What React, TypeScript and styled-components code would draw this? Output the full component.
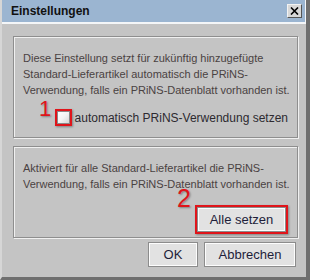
import React from "react";
import styled, { createGlobalStyle } from "styled-components";

const GlobalStyle = createGlobalStyle`
  html, body {
    margin: 0;
    padding: 0;
    background: #c4c4c4;
  }
  body {
    font-family: "Liberation Sans", Arial, sans-serif;
  }
`;

const Window = styled.div`
  width: 310px;
  height: 280px;
  box-sizing: border-box;
  display: flex;
  flex-direction: column;
  background: #c4c4c4;
  border-left: 2px solid #d6d6d6;
  border-right: 4px solid #6f6f6f;
  border-bottom: 3px solid #6f6f6f;
`;

const TitleBar = styled.div`
  height: 24px;
  box-sizing: border-box;
  display: flex;
  align-items: center;
  justify-content: space-between;
  padding: 0 3px 0 9px;
  background: #9bb5d1;
  border-bottom: 2px solid #f4f6f8;
  border-right: 1px solid #f4f6f8;
`;

const Title = styled.span`
  font-size: 12px;
  font-weight: bold;
  color: #111;
`;

const CloseButton = styled.div`
  width: 15px;
  height: 14px;
  box-sizing: border-box;
  display: flex;
  align-items: center;
  justify-content: center;
  background: #d8d8d8;
  border: 1px solid;
  border-color: #f2f2f2 #555 #555 #f2f2f2;
`;

const Content = styled.div`
  flex: 1;
  display: flex;
  flex-direction: column;
  padding: 12px 8px 0 11px;
`;

const Panels = styled.div`
  display: flex;
  flex-direction: column;
  gap: 8px;
`;

const Panel = styled.div<{ $height: number }>`
  position: relative;
  height: ${(p) => p.$height}px;
  box-sizing: border-box;
  display: flex;
  flex-direction: column;
  border: 1px solid #8e8e8e;
  box-shadow: inset 1px 1px 0 #f0f0f0, 1px 1px 0 #f0f0f0;
  padding: 13px 9px 0 9px;
`;

const Text = styled.p`
  margin: 0;
  font-size: 11px;
  line-height: 16px;
  white-space: nowrap;
  color: #4a4242;
`;

const CheckRow = styled.div`
  margin-top: auto;
  margin-bottom: 11px;
  display: flex;
  align-items: center;
  justify-content: flex-end;
  gap: 3px;
`;

const Marked = styled.div`
  border: 2px solid #e0141a;
  box-shadow: 1px 1px 2px rgba(0, 0, 0, 0.35);
  display: flex;
`;

const CheckBox = styled.div`
  width: 11px;
  height: 11px;
  border: 1px solid #8a8a8a;
  background: linear-gradient(135deg, #ffffff 0%, #f4f4f4 50%, #d6d6d6 100%);
`;

const CheckLabel = styled.span`
  font-size: 12px;
  white-space: nowrap;
  color: #2d2a30;
`;

const Marker = styled.span<{ $left: number; $top: number; $size: number }>`
  position: absolute;
  left: ${(p) => p.$left}px;
  top: ${(p) => p.$top}px;
  font-size: ${(p) => p.$size}px;
  line-height: ${(p) => p.$size}px;
  color: #e0141a;
  text-shadow: 1px 1px 2px rgba(0, 0, 0, 0.35);
`;

const ButtonRow = styled.div<{ $bottom?: number }>`
  margin-top: auto;
  margin-bottom: ${(p) => p.$bottom ?? 0}px;
  display: flex;
  justify-content: flex-end;
  gap: 6px;
`;

const Button = styled.div<{ $width: number }>`
  width: ${(p) => p.$width}px;
  height: 25px;
  box-sizing: border-box;
  display: flex;
  align-items: center;
  justify-content: center;
  background: #e2e2e2;
  border: 1px solid #8c8c8c;
  box-shadow: inset 1px 1px 0 #fdfdfd, inset -1px -1px 0 #fdfdfd;
  font-size: 13px;
  color: #1e1e3a;
`;

const Footer = styled.div`
  display: flex;
  justify-content: flex-end;
  gap: 6px;
  padding: 4px 2px 0 0;
`;

export default function App() {
  return (
    <>
      <GlobalStyle />
      <Window>
        <TitleBar>
          <Title>Einstellungen</Title>
          <CloseButton>
            <svg width="9" height="8" viewBox="0 0 9 8">
              <path d="M1 0.5 L8 7.5 M8 0.5 L1 7.5" stroke="#000" strokeWidth="1.6" />
            </svg>
          </CloseButton>
        </TitleBar>
        <Content>
          <Panels>
            <Panel $height={102}>
              <Text>
                Diese Einstellung setzt für zukünftig hinzugefügte
                <br />
                Standard-Lieferartikel automatisch die PRiNS-
                <br />
                Verwendung, falls ein PRiNS-Datenblatt vorhanden ist.
              </Text>
              <Marker $left={25} $top={61} $size={22}>1</Marker>
              <CheckRow>
                <Marked>
                  <CheckBox />
                </Marked>
                <CheckLabel>automatisch PRiNS-Verwendung setzen</CheckLabel>
              </CheckRow>
            </Panel>
            <Panel $height={92}>
              <Text>
                Aktiviert für alle Standard-Lieferartikel die PRiNS-
                <br />
                Verwendung, falls ein PRiNS-Datenblatt vorhanden ist.
              </Text>
              <Marker $left={163} $top={39} $size={25}>2</Marker>
              <ButtonRow $bottom={3}>
                <Marked>
                  <Button $width={89}>Alle setzen</Button>
                </Marked>
              </ButtonRow>
            </Panel>
          </Panels>
          <Footer>
            <Button $width={50}>OK</Button>
            <Button $width={92}>Abbrechen</Button>
          </Footer>
        </Content>
      </Window>
    </>
  );
}
